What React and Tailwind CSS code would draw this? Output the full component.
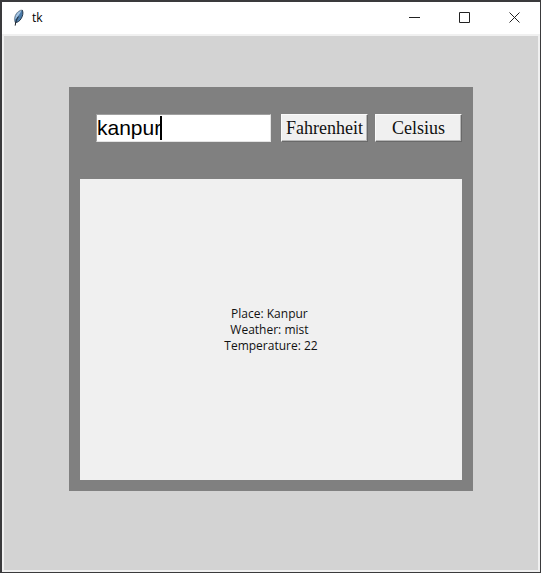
import React, { useState } from 'react';

function FeatherIcon() {
  return (
    <svg width="16" height="18" viewBox="0 0 16 18" aria-hidden="true">
      <path d="M5.2 13.6C3.6 10.6 4.6 6.6 7 3.8C8.4 2.1 10.4 1 12.2 1C13.6 3.4 12.8 7 11.2 9.6C9.8 12 7.4 13.6 5.2 13.6Z" fill="#4a7aa8" />
      <path d="M5.4 10.6C4.8 7 7.6 3 11.4 1.6C10.4 4.6 7.6 7.4 5.4 10.6Z" fill="#a9c6e2" />
      <path d="M12.2 1C13.6 3.4 12.8 7 11.2 9.6C9.8 12 7.4 13.6 5.2 13.6" fill="none" stroke="#24384c" strokeWidth="1" />
      <path d="M5.2 13.6C3.6 10.6 4.6 6.6 7 3.8C8.4 2.1 10.4 1 12.2 1" fill="none" stroke="#7d868f" strokeWidth="0.7" />
      <path d="M8.4 7.6C6.8 10 5.6 12.4 5.2 16.6" fill="none" stroke="#1b1f24" strokeWidth="1" />
    </svg>
  );
}

function TitleBar() {
  return (
    <header className="flex h-8 items-center justify-between bg-white px-2 pr-px pb-px">
      <div className="flex items-center gap-1.5">
        <FeatherIcon />
        <h1 className="font-['Open_Sans','Noto_Sans',sans-serif] text-[12px] leading-4 text-black">tk</h1>
      </div>

      {/* Window controls */}
      <div className="flex h-full text-[#222222]">
        <button type="button" aria-label="Minimize" className="flex w-[50px] items-center justify-center">
          <svg width="11" height="11" viewBox="0 0 11 11" fill="none" stroke="currentColor">
            <path d="M0 5.5H11" />
          </svg>
        </button>
        <button type="button" aria-label="Maximize" className="flex w-[50px] items-center justify-center">
          <svg width="11" height="11" viewBox="0 0 11 11" fill="none" stroke="currentColor">
            <path d="M0.5 0.5H10.5V10.5H0.5Z" />
          </svg>
        </button>
        <button type="button" aria-label="Close" className="flex w-[50px] items-center justify-center">
          <svg width="11" height="11" viewBox="0 0 11 11" fill="none" stroke="currentColor">
            <path d="M0.5 0.5L10.5 10.5M10.5 0.5L0.5 10.5" />
          </svg>
        </button>
      </div>
    </header>
  );
}

function UnitButton({ children, onClick }) {
  return (
    <button
      type="button"
      onClick={onClick}
      className="h-7 w-[87px] border border-t-[#fafafa] border-l-[#fafafa] border-r-[#696969] border-b-[#696969] bg-[#f0f0f0] font-['Liberation_Serif',serif] text-[18px] leading-6 text-[#111111] shadow-[inset_-1px_-1px_0_#b8b8b8]"
    >
      {children}
    </button>
  );
}

export default function App() {
  const [city, setCity] = useState('kanpur');
  const [unit, setUnit] = useState('C');
  const temperature = unit === 'C' ? 22 : 72;

  return (
    <div className="flex min-h-screen flex-col border border-t-2 border-l-2 border-[#3a3a3c] bg-white">
      <TitleBar />

      <main className="flex flex-1 flex-col border-2 border-[#f0f0f0] bg-[#d3d3d3] px-[65px] pt-[51px] pb-[79px]">
        <div className="flex flex-1 flex-col bg-[#808080] px-[11px] pt-[27px] pb-[11px]">
          {/* City and units */}
          <div className="flex pl-4">
            <div className="relative min-w-0 flex-1">
              <input
                type="text"
                aria-label="City"
                value={city}
                onChange={(e) => setCity(e.target.value)}
                className="block h-7 w-full border border-t-[#a0a0a0] border-l-[#a0a0a0] border-r-[#e3e3e3] border-b-[#e3e3e3] bg-white font-['Liberation_Sans',sans-serif] text-[21px] leading-6 text-black outline-none"
              />
              <span className="absolute top-0.5 left-16 h-6 w-0.5 bg-black" />
            </div>
            <div className="ml-2.5 flex gap-[7px]">
              <UnitButton onClick={() => setUnit('F')}>Fahrenheit</UnitButton>
              <UnitButton onClick={() => setUnit('C')}>Celsius</UnitButton>
            </div>
          </div>

          {/* Result */}
          <div className="mt-[37px] flex flex-1 items-center justify-center bg-[#f0f0f0]">
            <p className="whitespace-pre text-center font-['Open_Sans','Noto_Sans',sans-serif] text-[12px] leading-4 text-[#111111]">
              {`Place: Kanpur \nWeather: mist \nTemperature: ${temperature}`}
            </p>
          </div>
        </div>
      </main>
    </div>
  );
}
